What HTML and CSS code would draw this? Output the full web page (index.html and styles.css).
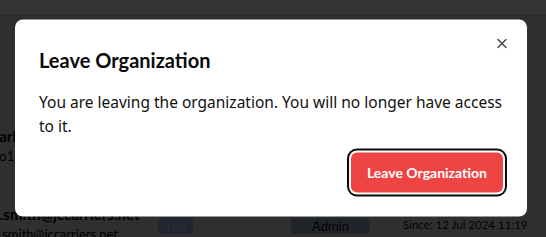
FILE: index.html
```html
<!DOCTYPE html>
<html lang="en">
<head>
<meta charset="utf-8">
<title>Leave Organization</title>
<link rel="stylesheet" href="styles.css">
</head>
<body>
<div class="page">
  <header class="topbar"></header>
  <main class="members">
    <div class="member member-first">
      <div class="who">
        <div class="name">carl-johnson</div>
        <div class="mail">bo15@jccarriers.net</div>
      </div>
    </div>
    <div class="member">
      <div class="who">
        <div class="name">j.smith@jccarriers.net</div>
        <div class="mail">j.smith@jccarriers.net</div>
      </div>
      <div class="cell"><span class="badge badge-you">You</span></div>
      <div class="cell"><span class="badge badge-role">Admin</span></div>
      <div class="cell since">Since: 12 Jul 2024 11:19</div>
    </div>
  </main>
</div>

<div class="overlay"></div>

<div class="dialog" role="dialog" aria-labelledby="dlg-title">
  <h2 class="dialog-title" id="dlg-title">Leave Organization</h2>
  <p class="dialog-text">You are leaving the organization. You will no longer have access to it.</p>
  <div class="dialog-footer">
    <button class="btn-danger" type="button">Leave Organization</button>
  </div>
  <button class="dialog-close" type="button" aria-label="Close">
    <svg width="16" height="16" viewBox="0 0 24 24" fill="none" stroke="currentColor" stroke-width="2" stroke-linecap="round" stroke-linejoin="round"><path d="M18 6 6 18"/><path d="m6 6 12 12"/></svg>
  </button>
</div>
</body>
</html>
```

FILE: styles.css
```css
* { box-sizing: border-box; }

html, body {
  margin: 0;
  padding: 0;
  height: 100%;
}

body {
  font-family: Lato, "Noto Sans", sans-serif;
  background: #e8e8e8;
  color: #0a0a0a;
  overflow: hidden;
}

.page {
  display: flex;
  flex-direction: column;
  min-height: 100%;
}

.topbar {
  height: 16px;
  background: #ffffff;
  border-bottom: 1px solid #d0d0d0;
}

.members {
  display: flex;
  flex-direction: column;
  padding-top: 92px;
}

.member {
  display: grid;
  grid-template-columns: 162px 133px 112px auto;
  align-items: center;
  margin-left: -4px;
  padding: 19px 0 17px;
  border-bottom: 1px solid #ffffff;
}

.member-first {
  margin-left: -8px;
}

.member:last-child {
  padding-top: 22px;
}

.who {
  display: flex;
  flex-direction: column;
  gap: 2px;
  white-space: nowrap;
}

.name {
  font-size: 15px;
  font-weight: 700;
  line-height: 19px;
}

.mail {
  font-size: 13px;
  line-height: 17px;
}

.badge {
  display: inline-flex;
  align-items: center;
  justify-content: center;
  height: 16px;
  border-radius: 3px;
  font-size: 13px;
}

.badge-you {
  width: 35px;
  background: #a8b4ee;
  color: #e6e9f7;
}

.badge-role {
  width: 79px;
  background: #a9b3d8;
  color: #0a0a0a;
}

.since {
  font-size: 11.5px;
  white-space: nowrap;
}

.overlay {
  position: fixed;
  inset: 0;
  background: rgba(0, 0, 0, 0.8);
}

.dialog {
  position: fixed;
  left: calc(50% - 2px);
  top: calc(50% - 1px);
  transform: translate(-50%, -50%);
  width: 512px;
  background: #ffffff;
  border-radius: 8px;
  padding: 24px;
  display: flex;
  flex-direction: column;
  font-family: "Noto Sans", "Open Sans", sans-serif;
}

.dialog-title {
  margin: 2px 0 0;
  font-family: Lato, "Noto Sans", sans-serif;
  font-size: 20px;
  font-weight: 700;
  line-height: 28px;
  color: #0a0a0a;
}

.dialog-text {
  margin: 16px 0 0;
  font-size: 15.5px;
  line-height: 24px;
  color: #111111;
}

.dialog-footer {
  display: flex;
  justify-content: flex-end;
  margin-top: 15px;
}

.btn-danger {
  height: 40px;
  padding: 0 16px;
  border: 0;
  border-radius: 6px;
  background: #ef4444;
  color: #ffffff;
  font-family: Lato, "Noto Sans", sans-serif;
  font-size: 14px;
  font-weight: 700;
  box-shadow: 0 0 0 2px #ffffff, 0 0 0 4px #0a0a0a;
}

.dialog-close {
  position: absolute;
  top: 16px;
  right: 17px;
  width: 16px;
  height: 16px;
  padding: 0;
  border: 0;
  background: none;
  color: #0a0a0a;
  opacity: 0.75;
  display: flex;
}
```
